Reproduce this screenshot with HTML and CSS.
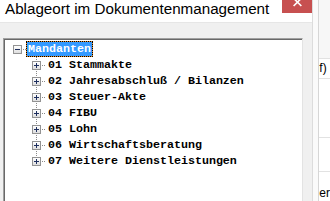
FILE: index.html
```html
<!DOCTYPE html>
<html>
<head>
<meta charset="utf-8">
<link rel="stylesheet" href="styles.css">
</head>
<body>
<div class="screen">
  <div class="dialog">
    <div class="titlebar">
      <span class="title">Ablageort im Dokumentenmanagement</span>
      <span class="close"><svg width="31" height="13" viewBox="0 0 31 13"><path d="M12 -2 L20 6 M20 -2 L12 6" stroke="#fff" stroke-width="1.7" fill="none"/></svg></span>
    </div>
    <div class="body">
      <div class="tree">
        <div class="row root">
          <span class="exp"><svg width="7" height="7" viewBox="0 0 7 7" shape-rendering="crispEdges"><rect x="1" y="3" width="5" height="1" fill="#1e2f5e"/></svg></span>
          <span class="dots"></span>
          <span class="label sel">Mandanten</span>
        </div>
        <div class="row child">
          <span class="exp"><svg width="7" height="7" viewBox="0 0 7 7" shape-rendering="crispEdges"><rect x="1" y="3" width="5" height="1" fill="#1e2f5e"/><rect x="3" y="1" width="1" height="5" fill="#1e2f5e"/></svg></span>
          <span class="dots"></span>
          <span class="label">01 Stammakte</span>
        </div>
        <div class="row child">
          <span class="exp"><svg width="7" height="7" viewBox="0 0 7 7" shape-rendering="crispEdges"><rect x="1" y="3" width="5" height="1" fill="#1e2f5e"/><rect x="3" y="1" width="1" height="5" fill="#1e2f5e"/></svg></span>
          <span class="dots"></span>
          <span class="label">02 Jahresabschluß / Bilanzen</span>
        </div>
        <div class="row child">
          <span class="exp"><svg width="7" height="7" viewBox="0 0 7 7" shape-rendering="crispEdges"><rect x="1" y="3" width="5" height="1" fill="#1e2f5e"/><rect x="3" y="1" width="1" height="5" fill="#1e2f5e"/></svg></span>
          <span class="dots"></span>
          <span class="label">03 Steuer-Akte</span>
        </div>
        <div class="row child">
          <span class="exp"><svg width="7" height="7" viewBox="0 0 7 7" shape-rendering="crispEdges"><rect x="1" y="3" width="5" height="1" fill="#1e2f5e"/><rect x="3" y="1" width="1" height="5" fill="#1e2f5e"/></svg></span>
          <span class="dots"></span>
          <span class="label">04 FIBU</span>
        </div>
        <div class="row child">
          <span class="exp"><svg width="7" height="7" viewBox="0 0 7 7" shape-rendering="crispEdges"><rect x="1" y="3" width="5" height="1" fill="#1e2f5e"/><rect x="3" y="1" width="1" height="5" fill="#1e2f5e"/></svg></span>
          <span class="dots"></span>
          <span class="label">05 Lohn</span>
        </div>
        <div class="row child">
          <span class="exp"><svg width="7" height="7" viewBox="0 0 7 7" shape-rendering="crispEdges"><rect x="1" y="3" width="5" height="1" fill="#1e2f5e"/><rect x="3" y="1" width="1" height="5" fill="#1e2f5e"/></svg></span>
          <span class="dots"></span>
          <span class="label">06 Wirtschaftsberatung</span>
        </div>
        <div class="row child last">
          <span class="exp"><svg width="7" height="7" viewBox="0 0 7 7" shape-rendering="crispEdges"><rect x="1" y="3" width="5" height="1" fill="#1e2f5e"/><rect x="3" y="1" width="1" height="5" fill="#1e2f5e"/></svg></span>
          <span class="dots"></span>
          <span class="label">07 Weitere Dienstleistungen</span>
        </div>
      </div>
    </div>
  </div>
  <div class="bgwin">
    <div class="strip"></div>
    <div class="bgcontent">
      <div class="cell c1"></div>
      <div class="cell c2">f)</div>
      <div class="cell c3"></div>
      <div class="cell c4"></div>
      <div class="cell c5">er</div>
    </div>
  </div>
</div>
</body>
</html>
```

FILE: styles.css
```css
html, body {
  margin: 0;
  padding: 0;
}
body {
  width: 330px;
  height: 201px;
  overflow: hidden;
  background: #ffffff;
}
.screen {
  display: flex;
  height: 201px;
}
.dialog {
  width: 316px;
  border-right: 1px solid #dcdcdc;
  display: flex;
  flex-direction: column;
  background: #f0f0f0;
}
.titlebar {
  height: 22px;
  background: #ffffff;
  display: flex;
  justify-content: space-between;
  align-items: flex-start;
  flex: none;
}
.title {
  padding: 1px 0 0 5px;
  font-family: "Liberation Sans", Arial, sans-serif;
  font-size: 15.2px;
  line-height: 16px;
  color: #000000;
  white-space: nowrap;
}
.close {
  width: 30px;
  height: 13px;
  background: #c75050;
  display: flex;
  overflow: hidden;
}
.close svg {
  display: block;
}
.body {
  flex: 1;
  border-top: 1px solid #e6e6e6;
  padding: 15px 0 0 3px;
  display: flex;
  min-height: 0;
}
.tree {
  width: 300px;
  box-sizing: border-box;
  background: #ffffff;
  border-top: 1px solid #a0a0a0;
  border-left: 1px solid #a0a0a0;
  border-right: 1px solid #e3e3e3;
  box-shadow: inset 1px 1px 0 #696969;
  padding: 2px 0 0 1px;
  font-family: "Liberation Mono", "Courier New", monospace;
  font-weight: bold;
  font-size: 11.67px;
  color: #000000;
}
.row {
  display: flex;
  align-items: flex-start;
  height: 16px;
}
.exp {
  width: 9px;
  height: 9px;
  box-sizing: border-box;
  margin-top: 4px;
  border: 1px solid #939393;
  background: linear-gradient(#ffffff, #dedede);
  display: flex;
  flex: none;
}
.exp svg {
  display: block;
}
.root .exp {
  margin-left: 8px;
}
.root .dots {
  width: 4px;
}
.child .exp {
  margin-left: 27px;
}
.child .dots {
  width: 5px;
}
.dots {
  height: 16px;
  flex: none;
  background-image: repeating-linear-gradient(to right, transparent 0 1px, #8a8a8a 1px 2px);
  background-repeat: no-repeat;
  background-size: 100% 1px;
  background-position: 0 8px;
}
.child {
  background-image: repeating-linear-gradient(to bottom, #8a8a8a 0 1px, transparent 1px 2px);
  background-repeat: no-repeat;
  background-size: 1px 100%;
  background-position: 31px 0;
}
.child.last {
  background-size: 1px 5px;
}
.label {
  height: 16px;
  box-sizing: border-box;
  border: 1px solid transparent;
  padding: 0 1px;
  line-height: 14px;
  white-space: nowrap;
}
.label.sel {
  background: #3399ff;
  color: #ffffff;
  border-color: #e8902a;
  outline: 1px dotted #000000;
  outline-offset: -1px;
}
.bgwin {
  flex: 1;
  display: flex;
}
.strip {
  width: 5px;
  background: #fafafa;
  border-right: 1px solid #d6d6d6;
}
.bgcontent {
  flex: 1;
  display: flex;
  flex-direction: column;
  overflow: hidden;
  font-family: "Liberation Sans", Arial, sans-serif;
  font-size: 12px;
  color: #000000;
}
.cell {
  border-bottom: 1px solid #e2e2e2;
  white-space: nowrap;
  overflow: hidden;
}
.c1 {
  height: 58px;
  background: #f7f7f7;
}
.c2 {
  height: 19px;
  line-height: 19px;
  background: #ffffff;
}
.c3 {
  height: 58px;
  background: #ffffff;
}
.c4 {
  height: 33px;
  background: #ffffff;
}
.c5 {
  flex: 1;
  border-bottom: none;
  line-height: 42px;
  background: #ffffff;
}
```
